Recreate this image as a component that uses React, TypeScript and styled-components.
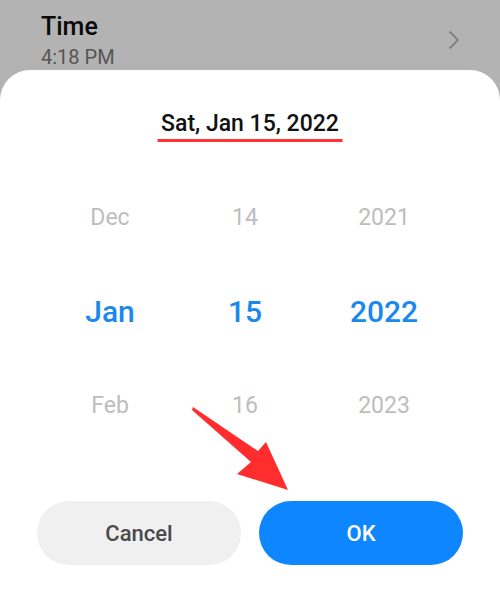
import React from "react";
import styled, { createGlobalStyle } from "styled-components";

const Global = createGlobalStyle`
  html, body { margin: 0; padding: 0; }
  body { font-family: Roboto, "Noto Sans", "Liberation Sans", sans-serif; }
`;

const Screen = styled.div`
  position: relative;
  width: 500px;
  height: 601px;
  overflow: hidden;
  background: #b3b3b3;
  display: flex;
  flex-direction: column;
`;

const SettingRow = styled.div`
  height: 70px;
  box-sizing: border-box;
  padding: 12px 40px 0 41px;
  display: flex;
  align-items: flex-start;
  justify-content: space-between;
`;

const SettingText = styled.div`
  display: flex;
  flex-direction: column;
`;

const SettingTitle = styled.div`
  font-size: 25px;
  line-height: 30px;
  font-weight: 500;
  color: #0a0a0a;
`;

const SettingValue = styled.div`
  font-size: 20px;
  line-height: 24px;
  color: #555;
  margin-top: 3px;
`;

const Chevron = styled.svg`
  margin-top: 18px;
  width: 12px;
  height: 20px;
`;

const Sheet = styled.div`
  flex: 1;
  background: #fff;
  border-radius: 30px 30px 0 0;
  display: flex;
  flex-direction: column;
  align-items: stretch;
  padding-top: 40px;
`;

const Title = styled.div`
  align-self: center;
  font-size: 23px;
  line-height: 28px;
  font-weight: 500;
  color: #111;
  position: relative;
  &::after {
    content: "";
    position: absolute;
    left: 50%;
    transform: translateX(-50%);
    top: 29px;
    width: 185px;
    height: 3px;
    background: #ff3333;
  }
`;

const Picker = styled.div`
  margin-top: 32px;
  padding-left: 40px;
  display: grid;
  grid-template-columns: 140px 130px 148px;
  grid-template-rows: 94px 94px 94px;
`;

const Cell = styled.div<{ $active?: boolean }>`
  display: flex;
  align-items: center;
  justify-content: center;
  font-size: ${(p) => (p.$active ? "30px" : "23px")};
  font-weight: ${(p) => (p.$active ? 500 : 400)};
  color: ${(p) => (p.$active ? "#1a88ee" : "#bdbdbd")};
`;

const Buttons = styled.div`
  margin-top: 49px;
  padding: 0 37px;
  display: flex;
  gap: 18px;
`;

const Button = styled.button<{ $primary?: boolean }>`
  flex: 1;
  height: 64px;
  border: none;
  border-radius: 32px;
  font-family: inherit;
  font-size: 22px;
  font-weight: 500;
  background: ${(p) => (p.$primary ? "#0d86ff" : "#f0f0f0")};
  color: ${(p) => (p.$primary ? "#fff" : "#4a4a4a")};
`;

const Arrow = styled.svg`
  position: absolute;
  left: 0;
  top: 0;
  width: 500px;
  height: 601px;
  pointer-events: none;
`;

const rows = [
  ["Dec", "14", "2021"],
  ["Jan", "15", "2022"],
  ["Feb", "16", "2023"],
];

export default function App() {
  return (
    <Screen>
      <Global />
      <SettingRow>
        <SettingText>
          <SettingTitle>Time</SettingTitle>
          <SettingValue>4:18 PM</SettingValue>
        </SettingText>
        <Chevron viewBox="0 0 12 20">
          <path d="M1.5 1.5 L10 10 L1.5 18.5" fill="none" stroke="#7f7f7f" strokeWidth="1.8" />
        </Chevron>
      </SettingRow>
      <Sheet>
        <Title>Sat, Jan 15, 2022</Title>
        <Picker>
          {rows.map((r, i) =>
            r.map((v, j) => (
              <Cell key={`${i}-${j}`} $active={i === 1}>
                {v}
              </Cell>
            ))
          )}
        </Picker>
        <Buttons>
          <Button>Cancel</Button>
          <Button $primary>OK</Button>
        </Buttons>
      </Sheet>
      <Arrow viewBox="0 0 500 601">
        <polygon
          points="193,407 258,451 266,442 288,490 237,474 251,462 192,410"
          fill="#ff2d2d"
        />
      </Arrow>
    </Screen>
  );
}
